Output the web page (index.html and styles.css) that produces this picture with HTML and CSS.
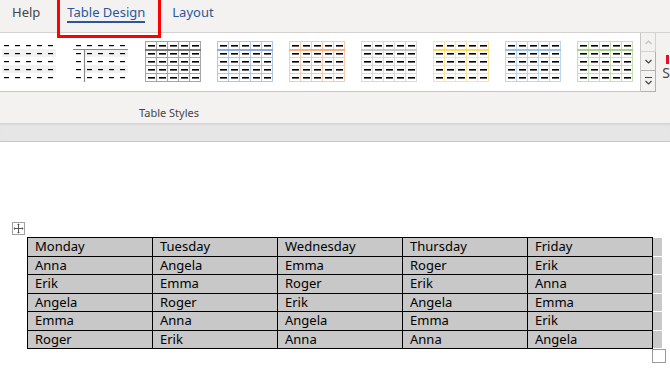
FILE: index.html
```html
<html>
<head>
	<title>Table Design</title>
	<link rel="stylesheet" href="styles.css">
</head>
<body>
	<svg class="defs" width="0" height="0">
		<defs>
			<pattern id="dash" width="11" height="8" patternUnits="userSpaceOnUse"><rect x="3" y="4" width="7" height="1.6" fill="#000"/></pattern>
			<pattern id="dash-s" width="11" height="8" patternUnits="userSpaceOnUse"><rect x="3" y="4" width="5" height="1.2" fill="#000"/></pattern>
		</defs>
	</svg>

	<div class="tabs">
		<span class="tab">Help</span>
		<span class="tab active">Table Design</span>
		<span class="tab link">Layout</span>
		<div class="highlight"></div>
	</div>

	<div class="ribbon">
		<div class="gallery-row">
			<div class="gallery">
				<!-- plain table -->
				<svg class="thumb" width="56" height="41" viewBox="0 0 56 41">
					<rect class="band" x="1" y="8" width="54" height="8"/>
					<rect class="band" x="1" y="24" width="54" height="8"/>
					<rect class="dashes-s" width="56" height="41"/>
				</svg>
				<!-- header row / first column -->
				<svg class="thumb" width="56" height="41" viewBox="0 0 56 41">
					<rect class="band" x="12" y="8" width="43" height="8"/>
					<rect class="band" x="12" y="24" width="43" height="8"/>
					<path class="rule" d="M0 8.5h55M11.5 8v33"/>
					<rect class="dashes-s" width="56" height="41"/>
				</svg>
				<svg class="thumb t-grid" width="56" height="41" viewBox="0 0 56 41">
					<path class="grid" d="M.5 .5h55v40h-55zM11.5 0v41M22.5 0v41M33.5 0v41M44.5 0v41M0 16.5h56M0 24.5h56M0 32.5h56"/>
					<rect class="head" x="0" y="8" width="56" height="2"/>
					<rect class="dashes" width="56" height="41"/>
				</svg>
				<svg class="thumb t-blue" width="56" height="41" viewBox="0 0 56 41">
					<path class="grid" d="M.5 .5h55v40h-55zM11.5 0v41M22.5 0v41M33.5 0v41M44.5 0v41M0 16.5h56M0 24.5h56M0 32.5h56"/>
					<rect class="head" x="0" y="8" width="56" height="2"/>
					<rect class="dashes" width="56" height="41"/>
				</svg>
				<svg class="thumb t-orange" width="56" height="41" viewBox="0 0 56 41">
					<path class="grid" d="M.5 .5h55v40h-55zM11.5 0v41M22.5 0v41M33.5 0v41M44.5 0v41M0 16.5h56M0 24.5h56M0 32.5h56"/>
					<rect class="head" x="0" y="8" width="56" height="2"/>
					<rect class="dashes" width="56" height="41"/>
				</svg>
				<svg class="thumb t-gray" width="56" height="41" viewBox="0 0 56 41">
					<path class="grid" d="M.5 .5h55v40h-55zM11.5 0v41M22.5 0v41M33.5 0v41M44.5 0v41M0 16.5h56M0 24.5h56M0 32.5h56"/>
					<rect class="head" x="0" y="8" width="56" height="2"/>
					<rect class="dashes" width="56" height="41"/>
				</svg>
				<svg class="thumb t-yellow" width="56" height="41" viewBox="0 0 56 41">
					<path class="grid" d="M.5 .5h55v40h-55zM11.5 0v41M22.5 0v41M33.5 0v41M44.5 0v41M0 16.5h56M0 24.5h56M0 32.5h56"/>
					<rect class="head" x="0" y="8" width="56" height="2"/>
					<rect class="dashes" width="56" height="41"/>
				</svg>
				<svg class="thumb t-sky" width="56" height="41" viewBox="0 0 56 41">
					<path class="grid" d="M.5 .5h55v40h-55zM11.5 0v41M22.5 0v41M33.5 0v41M44.5 0v41M0 16.5h56M0 24.5h56M0 32.5h56"/>
					<rect class="head" x="0" y="8" width="56" height="2"/>
					<rect class="dashes" width="56" height="41"/>
				</svg>
				<svg class="thumb t-green" width="56" height="41" viewBox="0 0 56 41">
					<path class="grid" d="M.5 .5h55v40h-55zM11.5 0v41M22.5 0v41M33.5 0v41M44.5 0v41M0 16.5h56M0 24.5h56M0 32.5h56"/>
					<rect class="head" x="0" y="8" width="56" height="2"/>
					<rect class="dashes" width="56" height="41"/>
				</svg>
			</div>
			<div class="scroller">
				<div class="scroll-btn disabled"><svg width="13" height="17" viewBox="0 0 13 17"><path d="M3.5 10l3-3 3 3" /></svg></div>
				<div class="scroll-btn"><svg width="13" height="17" viewBox="0 0 13 17"><path d="M3.5 7l3 3 3-3" /></svg></div>
				<div class="scroll-btn"><svg width="13" height="18" viewBox="0 0 13 18"><path d="M3 5.5h7M3.5 9l3 3 3-3" /></svg></div>
			</div>
			<div class="clipped">
				<div class="pen-mark"></div>
				<div class="clipped-text">S</div>
			</div>
		</div>
		<div class="group-label">Table Styles</div>
	</div>
	<div class="band-bar"></div>

	<div class="doc">
		<div class="table-wrap">
			<div class="move-handle">
				<svg width="13" height="13" viewBox="0 0 13 13"><path d="M6.5 2.5v8M2.5 6.5h8" /><path class="tip" d="M6.5 1.5l-1.5 1.5h3zM6.5 11.5l-1.5-1.5h3zM1.5 6.5l1.5-1.5v3zM11.5 6.5l-1.5-1.5v3z"/></svg>
			</div>
			<table class="names">
				<tr><td>Monday</td><td>Tuesday</td><td>Wednesday</td><td>Thursday</td><td>Friday</td><td class="end"></td></tr>
				<tr><td>Anna</td><td>Angela</td><td>Emma</td><td>Roger</td><td>Erik</td><td class="end"></td></tr>
				<tr><td>Erik</td><td>Emma</td><td>Roger</td><td>Erik</td><td>Anna</td><td class="end"></td></tr>
				<tr><td>Angela</td><td>Roger</td><td>Erik</td><td>Angela</td><td>Emma</td><td class="end"></td></tr>
				<tr><td>Emma</td><td>Anna</td><td>Angela</td><td>Emma</td><td>Erik</td><td class="end"></td></tr>
				<tr><td>Roger</td><td>Erik</td><td>Anna</td><td>Anna</td><td>Angela</td><td class="end"></td></tr>
			</table>
			<div class="resize-handle"></div>
		</div>
	</div>
</body>
</html>
```

FILE: styles.css
```css
*
{
	box-sizing: border-box;
}
body
{
	margin: 0px;
	width: 670px;
	height: 375px;
	overflow: hidden;
	background: #ffffff;
	font-family: "Noto Sans", "Liberation Sans", sans-serif;
}
.defs
{
	position: absolute;
}

/* tab strip */
.tabs
{
	position: relative;
	display: flex;
	gap: 27px;
	height: 33px;
	padding-left: 12px;
	background: #f3f2f1;
	border-bottom: 1px solid #d4d2d0;
}
.tab
{
	padding-top: 3px;
	font-size: 13px;
	line-height: 18px;
	color: #444444;
}
.tab.link
{
	color: #2b579a;
}
.tab.active
{
	color: #2b579a;
}
.tab.active::after
{
	content: "";
	display: block;
	height: 2px;
	background: #2b579a;
}
.highlight
{
	position: absolute;
	left: 57px;
	top: -3px;
	width: 104px;
	height: 41px;
	border: 3px solid #ff0000;
	z-index: 2;
}

/* ribbon */
.ribbon
{
	background: #f3f2f1;
}
.gallery-row
{
	display: flex;
	height: 59px;
}
.gallery
{
	display: flex;
	gap: 16px;
	width: 643px;
	padding: 8px 0px 0px 1px;
	background: #ffffff;
	border-right: 1px solid #c8c6c4;
	border-bottom: 1px solid #c8c6c4;
}
.thumb .band
{
	fill: #f2f2f2;
}
.thumb .rule
{
	fill: none;
	stroke: #8a8a8a;
	stroke-width: 1.2;
}
.thumb .dashes
{
	fill: url(#dash);
}
.thumb .dashes-s
{
	fill: url(#dash-s);
}
.thumb .grid
{
	fill: none;
	stroke-width: 1.2;
}
.t-grid .grid { stroke: #a6a6a6; }
.t-grid .head { fill: #7a7a7a; }
.t-blue .grid { stroke: #b4c6e7; }
.t-blue .head { fill: #8eaadb; }
.t-orange .grid { stroke: #f8cbad; }
.t-orange .head { fill: #f4b083; }
.t-gray .grid { stroke: #dbdbdb; }
.t-gray .head { fill: #c9c9c9; }
.t-yellow .grid { stroke: #ffe599; }
.t-yellow .head { fill: #ffd966; }
.t-sky .grid { stroke: #bdd7ee; }
.t-sky .head { fill: #9dc3e6; }
.t-green .grid { stroke: #c5e0b3; }
.t-green .head { fill: #a8d08d; }

.scroller
{
	display: flex;
	flex-direction: column;
	width: 15px;
}
.scroll-btn
{
	display: flex;
	align-items: center;
	justify-content: center;
	height: 19px;
	border: 1px solid #b3b1af;
	border-left: none;
	border-top: none;
	background: #f3f2f1;
}
.scroll-btn:first-child
{
	border-color: #d4d2d0;
}
.scroll-btn:last-child
{
	height: 21px;
}
.scroll-btn svg path
{
	fill: none;
	stroke: #444444;
	stroke-width: 1.2;
}
.scroll-btn.disabled svg path
{
	stroke: #c0c0c0;
}
.clipped
{
	flex: 1;
	padding: 22px 0px 0px 10px;
}
.pen-mark
{
	width: 3px;
	height: 9px;
	background: #e81123;
}
.clipped-text
{
	margin: 1px 0px 0px -4px;
	font-size: 14px;
	line-height: 16px;
	color: #444444;
}
.group-label
{
	width: 338px;
	height: 31px;
	padding-top: 13px;
	text-align: center;
	font-size: 11px;
	line-height: 16px;
	color: #444444;
}
.band-bar
{
	height: 19px;
	background: #e6e6e6;
	border-bottom: 1px solid #c8c8c8;
	box-shadow: inset 0px 3px 3px -2px rgba(0, 0, 0, 0.12);
}

/* document */
.doc
{
	padding: 95px 0px 0px 27px;
}
.table-wrap
{
	position: relative;
	width: 634px;
}
.move-handle
{
	position: absolute;
	left: -15px;
	top: -15px;
	width: 13px;
	height: 13px;
	border: 1px solid #a0a0a0;
	background: #ffffff;
}
.move-handle svg
{
	display: block;
	margin: -1px;
}
.move-handle path
{
	fill: none;
	stroke: #555555;
	stroke-width: 1;
}
.move-handle path.tip
{
	fill: #555555;
	stroke: none;
}
.names
{
	border-collapse: collapse;
	table-layout: fixed;
	width: 634px;
}
.names td
{
	width: 125px;
	height: 18.5px;
	padding: 0px 7px;
	border: 1px solid #000000;
	background: #c8c8c8;
	font-size: 13px;
	line-height: 17px;
	color: #000000;
	white-space: nowrap;
}
.names td.end
{
	width: 9px;
	padding: 0px;
	border-top: none;
	border-right: none;
	border-bottom: 1px solid #ffffff;
}
.resize-handle
{
	position: absolute;
	left: 625px;
	top: 112px;
	width: 14px;
	height: 14px;
	border: 1px solid #9a9a9a;
	background: #ffffff;
}
```
